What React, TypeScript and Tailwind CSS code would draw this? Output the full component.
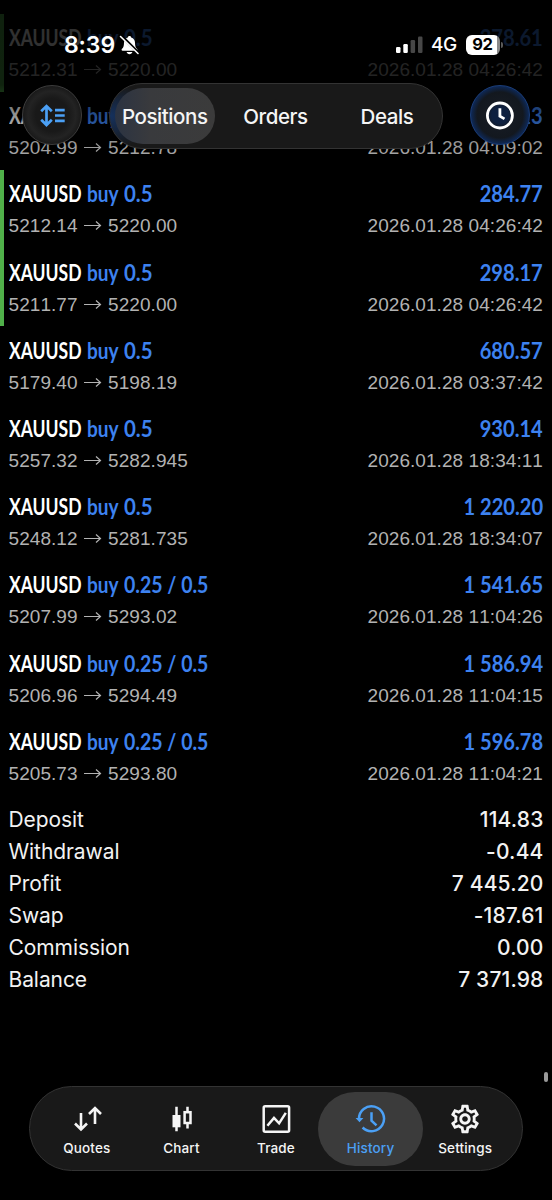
import React, { useState } from 'react';
import { MdOutlineSettings } from 'react-icons/md';

const deals = [
  { volume: '0.5', open: '5212.31', close: '5220.00', profit: '378.61', time: '2026.01.28 04:26:42', marked: true },
  { volume: '0.5', open: '5204.99', close: '5212.78', profit: '389.13', time: '2026.01.28 04:09:02' },
  { volume: '0.5', open: '5212.14', close: '5220.00', profit: '284.77', time: '2026.01.28 04:26:42', marked: true },
  { volume: '0.5', open: '5211.77', close: '5220.00', profit: '298.17', time: '2026.01.28 04:26:42', marked: true },
  { volume: '0.5', open: '5179.40', close: '5198.19', profit: '680.57', time: '2026.01.28 03:37:42' },
  { volume: '0.5', open: '5257.32', close: '5282.945', profit: '930.14', time: '2026.01.28 18:34:11' },
  { volume: '0.5', open: '5248.12', close: '5281.735', profit: '1 220.20', time: '2026.01.28 18:34:07' },
  { volume: '0.25 / 0.5', open: '5207.99', close: '5293.02', profit: '1 541.65', time: '2026.01.28 11:04:26' },
  { volume: '0.25 / 0.5', open: '5206.96', close: '5294.49', profit: '1 586.94', time: '2026.01.28 11:04:15' },
  { volume: '0.25 / 0.5', open: '5205.73', close: '5293.80', profit: '1 596.78', time: '2026.01.28 11:04:21' },
];

const summary = [
  ['Deposit', '114.83'],
  ['Withdrawal', '-0.44'],
  ['Profit', '7 445.20'],
  ['Swap', '-187.61'],
  ['Commission', '0.00'],
  ['Balance', '7 371.98'],
];

function QuotesIcon() {
  return (
    <svg width="32" height="30" viewBox="0 0 32 30" fill="none" stroke="currentColor" strokeWidth="2.6">
      <path d="M10 9V25M4 19.5l6 6 6-6M24 20V4.5M18 10l6-6 6 6" />
    </svg>
  );
}

function ChartIcon() {
  return (
    <svg width="30" height="30" viewBox="0 0 30 30" fill="none" stroke="currentColor" strokeWidth="2.5">
      <path d="M10.5 2.7V27.2M21.5 2.7V8M21.5 19.5v5" />
      <rect x="6.5" y="11" width="8" height="12.3" fill="currentColor" stroke="none" />
      <rect x="18.6" y="8.2" width="5.9" height="10.8" />
    </svg>
  );
}

function TradeIcon() {
  return (
    <svg width="30" height="30" viewBox="0 0 30 30" fill="none" stroke="currentColor" strokeWidth="2.5">
      <rect x="2.7" y="2.2" width="25.4" height="25.6" rx="1.5" />
      <path d="M6.4 21.8l6.6-7.9 5.1 5.4 6.7-10.5" />
    </svg>
  );
}

function HistoryIcon() {
  return (
    <svg width="32" height="30" viewBox="0 0 32 30" fill="none" stroke="currentColor" strokeWidth="2.5">
      <path d="M4 15A12.5 12.5 0 1 1 7.6 23.5" />
      <path d="M16.5 8.3v8.4l5 4.6" />
      <path d="M.6 14h7.8l-3.9 4.3z" fill="currentColor" stroke="none" />
    </svg>
  );
}

const navItems = [
  { label: 'Quotes', icon: <QuotesIcon /> },
  { label: 'Chart', icon: <ChartIcon /> },
  { label: 'Trade', icon: <TradeIcon /> },
  { label: 'History', icon: <HistoryIcon /> },
  { label: 'Settings', icon: <MdOutlineSettings size={34} /> },
];

function DealRow({ deal }: { deal: any }) {
  return (
    <div className={`h-[78.2px] border-l-4 pl-[4.5px] pr-[9px] pt-[7.5px] ${deal.marked ? 'border-[#50b04a]' : 'border-transparent'}`}>
      <div className="flex justify-between h-[33px] leading-[33px] text-[23.5px] font-bold font-[Lato,sans-serif] whitespace-nowrap text-[#3d82f0]">
        <p className="flex">
          <span className="w-[78px] origin-left scale-x-[0.745] text-white">XAUUSD </span>
          <span className="w-[37.5px] origin-left scale-x-[0.81]">buy </span>
          <span className={`origin-left ${deal.volume === '0.5' ? 'scale-x-[0.87]' : 'scale-x-[0.83]'}`}>{deal.volume}</span>
        </p>
        <p className="origin-right scale-x-[0.855]">{deal.profit}</p>
      </div>
      <div className="flex items-center justify-between h-[32px] leading-[32px] text-[19px] tracking-[0.06px] text-[#b2b2b2] [font-kerning:none]">
        <p className="flex items-center">
          {deal.open}
          <svg className="ml-[6.5px] mr-[6px]" width="18" height="12" viewBox="0 0 18 12" fill="none" stroke="currentColor" strokeWidth="1.2">
            <path d="M0 5.5h16.5M12 1.5l4.5 4-4.5 4" />
          </svg>
          {deal.close}
        </p>
        <p>{deal.time}</p>
      </div>
    </div>
  );
}

function StatusBar() {
  return (
    <div className="absolute top-[30px] left-[64px] right-[49px] h-[30px] flex items-center justify-between font-[Inter,sans-serif] text-white">
      <div className="flex items-center gap-[4px]">
        <span className="text-[23px] font-semibold tracking-[-0.1px]">8:39</span>
        <svg width="21" height="20" viewBox="0 0 21 20">
          <path d="M10.5 1c.9 0 1.6.6 1.7 1.4 2.4.8 3.8 2.8 3.8 5.3 0 3.5.8 4.9 2 6.1.8.9.5 2-.7 2H3.7c-1.2 0-1.5-1.1-.7-2 1.2-1.2 2-2.6 2-6.1 0-2.5 1.4-4.5 3.8-5.3C8.9 1.6 9.6 1 10.5 1zM7.6 17h5.8c-.4 1.4-1.5 2.2-2.9 2.2S8 18.4 7.6 17z" fill="white" />
          <path d="M2.8 1.2l17 17" stroke="black" strokeWidth="3" />
          <path d="M1.5 1.5l17.5 17" stroke="white" strokeWidth="1.6" strokeLinecap="round" />
        </svg>
      </div>
      <div className="flex items-center">
        <svg width="27" height="18" viewBox="0 0 27 18" fill="white">
          <rect x="0" y="11" width="4.5" height="6" rx="1.2" />
          <rect x="7.3" y="8" width="4.5" height="9" rx="1.2" />
          <rect x="14.6" y="4" width="4.5" height="13" rx="1.2" opacity=".28" />
          <rect x="22" y="0.5" width="4.5" height="16.5" rx="1.2" opacity=".28" />
        </svg>
        <span className="ml-[8px] mt-px text-[19px] font-medium tracking-[-0.3px]">4G</span>
        <div className="ml-[8.5px] w-[34.5px] h-[19.5px] rounded-[6px] bg-[linear-gradient(90deg,#fff_91%,#8a8a8a_91%)] pr-[1px] text-black text-[16.5px] font-bold tracking-[-0.6px] leading-[19.5px] text-center">
          92
        </div>
        <div className="ml-px w-[2px] h-[6px] rounded-r-full bg-[#5a5a5a]" />
      </div>
    </div>
  );
}

export default function App() {
  const [activeTab, setActiveTab] = useState('Positions');
  const [activeNav, setActiveNav] = useState('History');

  return (
    <div className="relative w-[552px] h-[1200px] overflow-hidden bg-black font-['Liberation_Sans',Arial,sans-serif]">

      {/* Deals list */}
      <main className="pt-[13.5px]">
        {deals.map((deal, i) => (
          <DealRow key={i} deal={deal} />
        ))}

        {/* Totals */}
        <section className="pt-[8.5px] pl-[8.5px] pr-[8.5px] font-[Inter,sans-serif] text-[21px] text-[#f2f2f2]">
          {summary.map(([label, value]) => (
            <div key={label} className="flex justify-between h-[32px] leading-[32px]">
              <span className="tracking-[-0.08px]">{label}</span>
              <span className="font-medium tracking-[0.15px]">{value}</span>
            </div>
          ))}
        </section>
      </main>

      {/* Fade under the header */}
      <div className="absolute inset-x-0 top-0 h-[170px] bg-[linear-gradient(180deg,rgba(0,0,0,0.82)_0px,rgba(0,0,0,0.8)_85px,rgba(0,0,0,0.42)_115px,rgba(0,0,0,0.1)_150px,transparent_170px)]" />

      <StatusBar />

      {/* Header controls */}
      <button className="absolute left-[22px] top-[85px] w-[60px] h-[60px] rounded-full border border-[#3c3c3c] bg-[radial-gradient(circle,#191919_40%,#232323_58%,#1a1a1a_70%)] text-[#4ba0f5]">
        <svg width="58" height="58" viewBox="0 0 58 58" fill="none" stroke="currentColor" strokeWidth="2.7">
          <path d="M23.5 21v17M18.2 25.3l5.3-5.2 5.3 5.2M18.2 33.8l5.3 5.2 5.3-5.2M32 24.2h9.7M32 29.5h9.7M32 34.8h9.7" />
        </svg>
      </button>

      <div className="absolute left-[109px] top-[83px] w-[333.5px] h-[66px] rounded-full border border-[#333] bg-[#191919] overflow-hidden">
        <div className="absolute -left-px inset-y-0 w-[50px] bg-[radial-gradient(ellipse_at_left,rgba(18,65,140,0.6),transparent_70%)]" />
        <div className="relative flex items-center h-full font-[Inter,sans-serif] text-[20.5px] font-medium text-[#f5f5f5]">
          {['Positions', 'Orders', 'Deals'].map(tab => (
            <button
              key={tab}
              onClick={() => setActiveTab(tab)}
              className={`h-[55.5px] pt-[2px] rounded-full text-center ${tab === 'Positions' ? 'ml-[4.5px] w-[100.5px]' : tab === 'Orders' ? 'w-[121px]' : 'w-[102px]'} ${activeTab === tab ? 'bg-[linear-gradient(90deg,#2b3342,#393a3d_35%,#3b3b3b)]' : ''}`}
            >
              <span className="tracking-[-0.42px]">{tab}</span>
            </button>
          ))}
        </div>
      </div>

      <button className="absolute left-[469.5px] top-[85px] w-[60px] h-[60px] rounded-full border border-[#1b3d78] bg-[radial-gradient(circle,#0e2040_20%,#151a22_34%,#13181f_56%,#0d2a5c_72%)] text-white">
        <svg width="58" height="58" viewBox="0 0 58 58" fill="none" stroke="currentColor" strokeWidth="2.8">
          <circle cx="28.9" cy="29.5" r="12.5" />
          <path d="M28.9 22.3v8l4.6 2.6" />
        </svg>
      </button>

      {/* Scroll indicator */}
      <div className="absolute left-[544px] top-[1072px] w-[4px] h-[10px] rounded-full bg-[#9a9a9a]" />

      {/* Bottom Navigation */}
      <nav className="absolute left-[29px] top-[1086px] w-[494px] h-[85px] px-[9.5px] flex rounded-full border border-[#333] bg-[#191919] font-[Inter,sans-serif]">
        {navItems.map(item => (
          <button
            key={item.label}
            onClick={() => setActiveNav(item.label)}
            className={`relative flex-1 ${activeNav === item.label ? 'text-[#4ba0f5]' : 'text-[#f5f5f5]'}`}
          >
            {activeNav === item.label && <span className="absolute -inset-x-[5.5px] top-[5px] bottom-[4.5px] rounded-full bg-[#3b3b3b]" />}
            <span className="relative flex flex-col items-center pt-[3.5px]">
              <span className="flex items-center justify-center h-[30px]">{item.icon}</span>
              <span className="mt-[5px] text-[13.5px] leading-[18px] font-medium tracking-[0.15px]">{item.label}</span>
            </span>
          </button>
        ))}
      </nav>
    </div>
  );
}
